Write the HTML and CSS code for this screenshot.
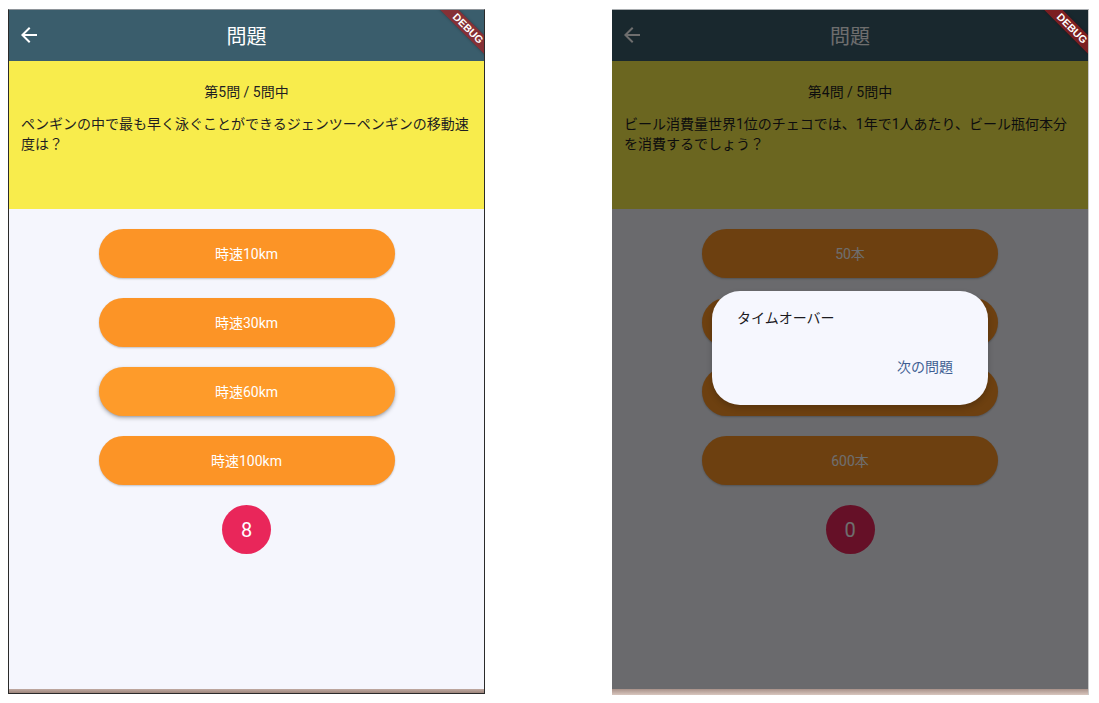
FILE: index.html
```html
<!DOCTYPE html>
<html lang="ja">
<head>
<meta charset="utf-8">
<title>問題</title>
<link rel="stylesheet" href="styles.css">
</head>
<body>
<div class="screens">
  <div class="phone phone-a">
    <header class="appbar">
      <svg class="back" viewBox="0 0 24 24" width="24" height="24"><path d="M20 11H7.83l5.59-5.59L12 4l-8 8 8 8 1.41-1.41L7.83 13H20v-2z" fill="currentColor"/></svg>
      <h1 class="title">問題</h1>
    </header>
    <section class="question">
      <p class="counter">第5問 / 5問中</p>
      <p class="qtext">ペンギンの中で最も早く泳ぐことができるジェンツーペンギンの移動速度は？</p>
    </section>
    <main class="answers">
      <button class="answer">時速10km</button>
      <button class="answer">時速30km</button>
      <button class="answer answer-hover">時速60km</button>
      <button class="answer">時速100km</button>
      <div class="timer">8</div>
    </main>
    <div class="navstrip"></div>
    <div class="debug">DEBUG</div>
  </div>

  <div class="phone phone-b">
    <header class="appbar">
      <svg class="back" viewBox="0 0 24 24" width="24" height="24"><path d="M20 11H7.83l5.59-5.59L12 4l-8 8 8 8 1.41-1.41L7.83 13H20v-2z" fill="currentColor"/></svg>
      <h1 class="title">問題</h1>
    </header>
    <section class="question">
      <p class="counter">第4問 / 5問中</p>
      <p class="qtext">ビール消費量世界1位のチェコでは、1年で1人あたり、ビール瓶何本分を消費するでしょう？</p>
    </section>
    <main class="answers">
      <button class="answer">50本</button>
      <button class="answer">100本</button>
      <button class="answer">300本</button>
      <button class="answer">600本</button>
      <div class="timer">0</div>
    </main>
    <div class="navstrip navstrip-b"></div>
    <div class="scrim">
      <div class="dialog">
        <p class="dialog-text">タイムオーバー</p>
        <div class="dialog-actions"><span class="dialog-btn">次の問題</span></div>
      </div>
    </div>
    <div class="debug">DEBUG</div>
  </div>
</div>
</body>
</html>
```

FILE: styles.css
```css
* { box-sizing: border-box; }

html, body {
  margin: 0;
  padding: 0;
  background: #ffffff;
  width: 1099px;
  height: 703px;
  overflow: hidden;
  font-family: Roboto, "Noto Sans CJK JP", sans-serif;
}

.screens {
  display: flex;
  gap: 127px;
  padding: 9px 0 0 8px;
}

.phone {
  position: relative;
  width: 477px;
  height: 685px;
  display: flex;
  flex-direction: column;
  overflow: hidden;
  background: #f5f6fd;
}

.phone-a {
  border: 1px solid #2a2a2a;
  border-top-color: #8e9499;
}

.phone-b {
  border: 1px solid #c9c9c9;
  border-left: 0;
  border-top-color: #a9adb0;
  border-bottom: 0;
  height: 686px;
}

.appbar {
  height: 51px;
  flex: none;
  background: #3a5d6c;
  color: #ffffff;
  display: flex;
  align-items: center;
  justify-content: center;
  position: relative;
}

.back {
  position: absolute;
  left: 8px;
  top: 13px;
  color: #ffffff;
}

.title {
  margin: 0;
  font-size: 20px;
  font-weight: 400;
  line-height: 28px;
  padding-top: 1px;
  font-family: "Noto Sans CJK JP", sans-serif;
}

.question {
  height: 148px;
  flex: none;
  background: #f8ec4c;
  padding: 21px 12px 0 12px;
  color: #1f1e22;
}

.question p { margin: 0; }

.counter {
  text-align: center;
  font-size: 14px;
  line-height: 20px;
}

.qtext {
  margin-top: 12px !important;
  font-size: 14px;
  line-height: 20px;
}

.answers {
  flex: 1;
  display: flex;
  flex-direction: column;
  align-items: center;
  gap: 20px;
  padding-top: 20px;
}

.answer {
  width: 296px;
  height: 49px;
  border: 0;
  border-radius: 25px;
  background: #fc9426;
  color: #ffffff;
  font-family: Roboto, "Noto Sans CJK JP", sans-serif;
  font-size: 14px;
  line-height: 20px;
  padding: 0;
  box-shadow: 0 1px 2px rgba(0, 0, 0, 0.22);
}

.answer-hover {
  background: #fe9b2a;
  box-shadow: 0 2px 4px rgba(0, 0, 0, 0.28), 0 1px 2px rgba(0, 0, 0, 0.12);
}

.timer {
  width: 49px;
  height: 49px;
  border-radius: 50%;
  background: #e9265a;
  color: #ffffff;
  font-size: 20px;
  display: flex;
  align-items: center;
  justify-content: center;
}

.navstrip {
  height: 4px;
  flex: none;
  background: linear-gradient(#c0aaa2, #9c857c);
}

.navstrip-b {
  height: 6px;
  background: linear-gradient(#a89189, #d8c6be);
}

.scrim {
  position: absolute;
  left: 0;
  right: 0;
  top: 0;
  bottom: 6px;
  background: rgba(0, 0, 0, 0.57);
  display: flex;
  align-items: center;
  justify-content: center;
  padding-bottom: 3px;
}

.dialog {
  width: 276px;
  height: 114px;
  border-radius: 28px;
  background: #f6f7fe;
  padding: 17px 35px 28px 25px;
  display: flex;
  flex-direction: column;
  box-shadow: 0 3px 6px rgba(0, 0, 0, 0.2);
}

.dialog-text {
  margin: 0;
  font-size: 14px;
  line-height: 20px;
  color: #1c1b1f;
}

.dialog-actions {
  margin-top: auto;
  text-align: right;
  line-height: 20px;
}

.dialog-btn {
  font-size: 14px;
  color: #3f5f93;
}

.debug {
  position: absolute;
  top: 12px;
  right: -24px;
  width: 80px;
  height: 13px;
  transform: rotate(45deg);
  background: rgba(170, 26, 28, 0.68);
  color: #ffffff;
  font-family: "Liberation Sans", Roboto, sans-serif;
  font-weight: 700;
  font-size: 10.5px;
  line-height: 13px;
  text-align: center;
  letter-spacing: 0;
  box-shadow: 0 0 3px rgba(0, 0, 0, 0.3);
}
```
